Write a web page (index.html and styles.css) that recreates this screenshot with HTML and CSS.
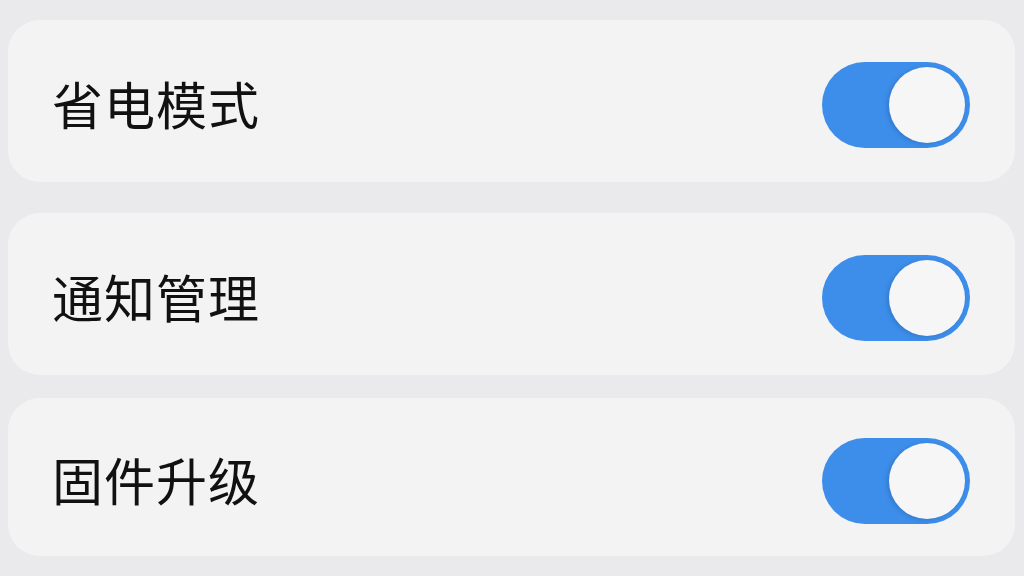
FILE: index.html
```html
<!DOCTYPE html>
<html lang="zh-CN">
    <head>
        <meta charset="UTF-8">
        <meta name="viewport" content="width=device-width, initial-scale=1.0">
        <title>设置</title>
        <link rel="stylesheet" href="styles.css">
    </head>
    <body>
        <ul class="clLista">
            <li class="clItem clPrimeiro">
                <span class="clTitulo">省电模式</span>
                <span class="clChave"><span class="clBola"></span></span>
            </li>
            <li class="clItem">
                <span class="clTitulo">通知管理</span>
                <span class="clChave"><span class="clBola"></span></span>
            </li>
            <li class="clItem clUltimo">
                <span class="clTitulo">固件升级</span>
                <span class="clChave"><span class="clBola"></span></span>
            </li>
        </ul>
    </body>
</html>
```

FILE: styles.css
```css
/*Reset*/
html,
body,
ul,
li {
    margin: 0;
    padding: 0;
}

ul {
    list-style: none;
}

html {
    box-sizing: border-box;
}

*, *::before, *::after {
    box-sizing: inherit;
}

/*Página*/

body {
    background-color: #eaeaec;
    font-family: "Noto Sans CJK SC", "Noto Sans", sans-serif;
    color: #111111;
}

.clLista {
    display: flex;
    flex-direction: column;
    gap: 23px;
    padding: 20px 9px 0 8px;
}

.clItem {
    display: flex;
    align-items: center;
    justify-content: space-between;
    height: 162px;
    padding: 4px 45px 0 44px;
    background-color: #f3f3f3;
    border-radius: 32px;
}

.clPrimeiro {
    margin-bottom: 8px;
}

.clUltimo {
    height: 158px;
}

.clTitulo {
    font-size: 51px;
    font-weight: 400;
    line-height: 1;
    letter-spacing: 1px;
}

/*Chave ligada*/
.clChave {
    display: flex;
    justify-content: flex-end;
    align-items: center;
    width: 148px;
    height: 86px;
    margin-top: 4px;
    padding: 5px;
    background-color: #3d8eea;
    border-radius: 43px;
}

.clBola {
    width: 76px;
    height: 76px;
    background-color: #f6f6f7;
    border-radius: 50%;
    box-shadow: -2px 1px 4px rgba(20, 60, 120, 0.25);
}
```
